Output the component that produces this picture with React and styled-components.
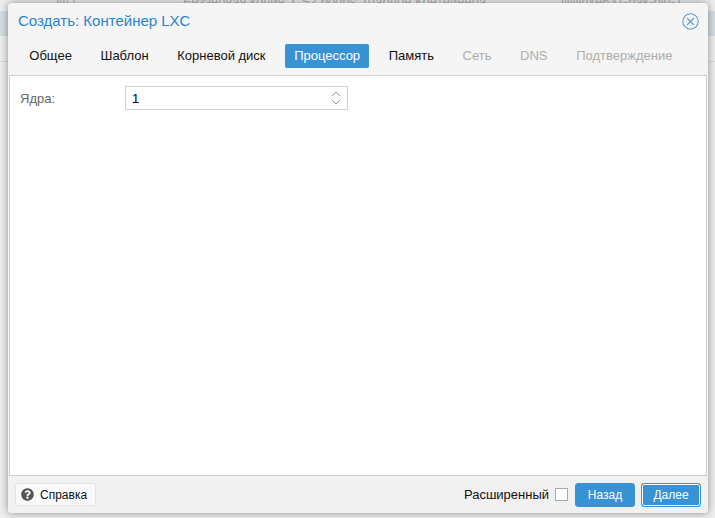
import React from "react";
import styled, { createGlobalStyle } from "styled-components";
import { FaQuestionCircle } from "react-icons/fa";

const Global = createGlobalStyle`
  html, body { margin: 0; padding: 0; height: 100%; }
  body { background: #f0f0f0; font-family: "Liberation Sans", Arial, sans-serif; overflow: hidden; }
`;

const Page = styled.div`
  position: relative;
  width: 715px;
  height: 518px;
  overflow: hidden;
  background: #efefef;
`;

const BehindRow = styled.div`
  display: grid;
  grid-template-columns: 127px 378px 1fr;
  padding-left: 56px;
  height: 11px;
  margin-top: -4px;
  margin-bottom: 4px;
  font-size: 13px;
  line-height: 11px;
  white-space: nowrap;
  color: #b5b5b5;
`;

const BehindSelected = styled.div`
  height: 25px;
  background: #d5dee3;
`;

const BehindRule = styled.div`
  height: 25px;
  border-bottom: 1px solid #dcdcdc;
`;

const Win = styled.div`
  position: absolute;
  left: 8px;
  top: 3px;
  width: 700px;
  height: 510px;
  box-sizing: border-box;
  background: #f5f5f5;
  border-radius: 4px;
  box-shadow: 0 0 9px rgba(0, 0, 0, 0.42);
  display: flex;
  flex-direction: column;
`;

const Header = styled.div`
  height: 35px;
  display: flex;
  align-items: center;
  justify-content: space-between;
  padding: 0 10px;
  flex: none;
`;

const Title = styled.div`
  font-size: 15px;
  color: #2b83cc;
`;

const CloseIcon = styled.svg`
  width: 17px;
  height: 17px;
  margin-right: -1px;
  margin-top: 1px;
  color: #5c9bd6;
`;

const Tabs = styled.div`
  height: 39px;
  display: flex;
  align-items: flex-start;
  padding: 6px 0 0 12.3px;
  gap: 10.6px;
  flex: none;
  box-sizing: border-box;
  margin-bottom: -2px;
`;

const Tab = styled.div`
  height: 24px;
  line-height: 24px;
  padding: 0 9px;
  font-size: 13px;
  border-radius: 2px;
  color: ${(p) => (p.$active ? "#fff" : p.$disabled ? "#adadad" : "#111")};
  background: ${(p) => (p.$active ? "#3892d4" : "transparent")};
`;

const Body = styled.div`
  flex: 1;
  margin: 0 1px;
  background: #fff;
  border: 1px solid #cfcfcf;
  padding: 10px;
`;

const Field = styled.div`
  display: flex;
  align-items: center;
  height: 24px;
`;

const Label = styled.div`
  width: 105px;
  font-size: 13px;
  color: #666;
`;

const Spinner = styled.div`
  width: 223px;
  height: 24px;
  box-sizing: border-box;
  border: 1px solid #cfcfcf;
  display: flex;
  align-items: center;
  justify-content: space-between;
  padding: 0 5px 0 6px;
  font-size: 13px;
  color: #000;
`;

const Arrows = styled.svg`
  width: 12px;
  height: 18px;
  color: #9a9a9a;
`;

const Footer = styled.div`
  height: 37px;
  flex: none;
  display: flex;
  align-items: center;
  justify-content: space-between;
  padding: 0 7px;
  background: #f1f1f1;
  border-radius: 0 0 4px 4px;
`;

const HelpButton = styled.div`
  height: 23px;
  box-sizing: border-box;
  display: flex;
  align-items: center;
  gap: 6px;
  padding: 0 8px 0 5px;
  background: #f9f9f9;
  border: 1px solid #e4e4e4;
  border-radius: 3px;
  font-size: 12px;
  color: #111;
  svg { color: #555; font-size: 13px; }
`;

const Right = styled.div`
  display: flex;
  align-items: center;
`;

const AdvLabel = styled.div`
  font-size: 13px;
  color: #111;
  margin-right: 6px;
`;

const Check = styled.div`
  width: 13px;
  height: 13px;
  box-sizing: border-box;
  border: 1px solid #a9a9a9;
  background: #fff;
  margin-right: 7px;
`;

const Button = styled.div`
  width: 60px;
  height: 24px;
  box-sizing: border-box;
  background: #3892d4;
  color: #fff;
  font-size: 12px;
  border-radius: 3px;
  display: flex;
  align-items: center;
  justify-content: center;
  margin-left: ${(p) => (p.$next ? "6px" : "0")};
  border: 1px solid #3892d4;
  box-shadow: ${(p) => (p.$next ? "inset 0 0 0 1px #fff" : "none")};
`;

const tabs = [
  { label: "Общее" },
  { label: "Шаблон" },
  { label: "Корневой диск" },
  { label: "Процессор", active: true },
  { label: "Память" },
  { label: "Сеть", disabled: true },
  { label: "DNS", disabled: true },
  { label: "Подтверждение", disabled: true },
];

export default function App() {
  return (
    <Page>
      <Global />
      <BehindRow>
        <span>N/J</span>
        <span>Безэновая копия: CS2 boobs: Шаблон Контейнера</span>
        <span>lllllllhxe631-bak-biu-1</span>
      </BehindRow>
      <BehindSelected />
      <BehindRule />
      <Win>
        <Header>
          <Title>Создать: Контейнер LXC</Title>
          <CloseIcon viewBox="0 0 17 17" fill="none" stroke="currentColor" strokeWidth="1.1">
            <circle cx="8.5" cy="8.5" r="7.7" />
            <path d="M5 5l7 7M12 5l-7 7" />
          </CloseIcon>
        </Header>
        <Tabs>
          {tabs.map((t) => (
            <Tab key={t.label} $active={t.active} $disabled={t.disabled}>
              {t.label}
            </Tab>
          ))}
        </Tabs>
        <Body>
          <Field>
            <Label>Ядра:</Label>
            <Spinner>
              1
              <Arrows viewBox="0 0 12 18" fill="none" stroke="currentColor" strokeWidth="1">
                <path d="M2 7l4-4 4 4M2 11l4 4 4-4" />
              </Arrows>
            </Spinner>
          </Field>
        </Body>
        <Footer>
          <HelpButton>
            <FaQuestionCircle />
            Справка
          </HelpButton>
          <Right>
            <AdvLabel>Расширенный</AdvLabel>
            <Check />
            <Button>Назад</Button>
            <Button $next>Далее</Button>
          </Right>
        </Footer>
      </Win>
    </Page>
  );
}
